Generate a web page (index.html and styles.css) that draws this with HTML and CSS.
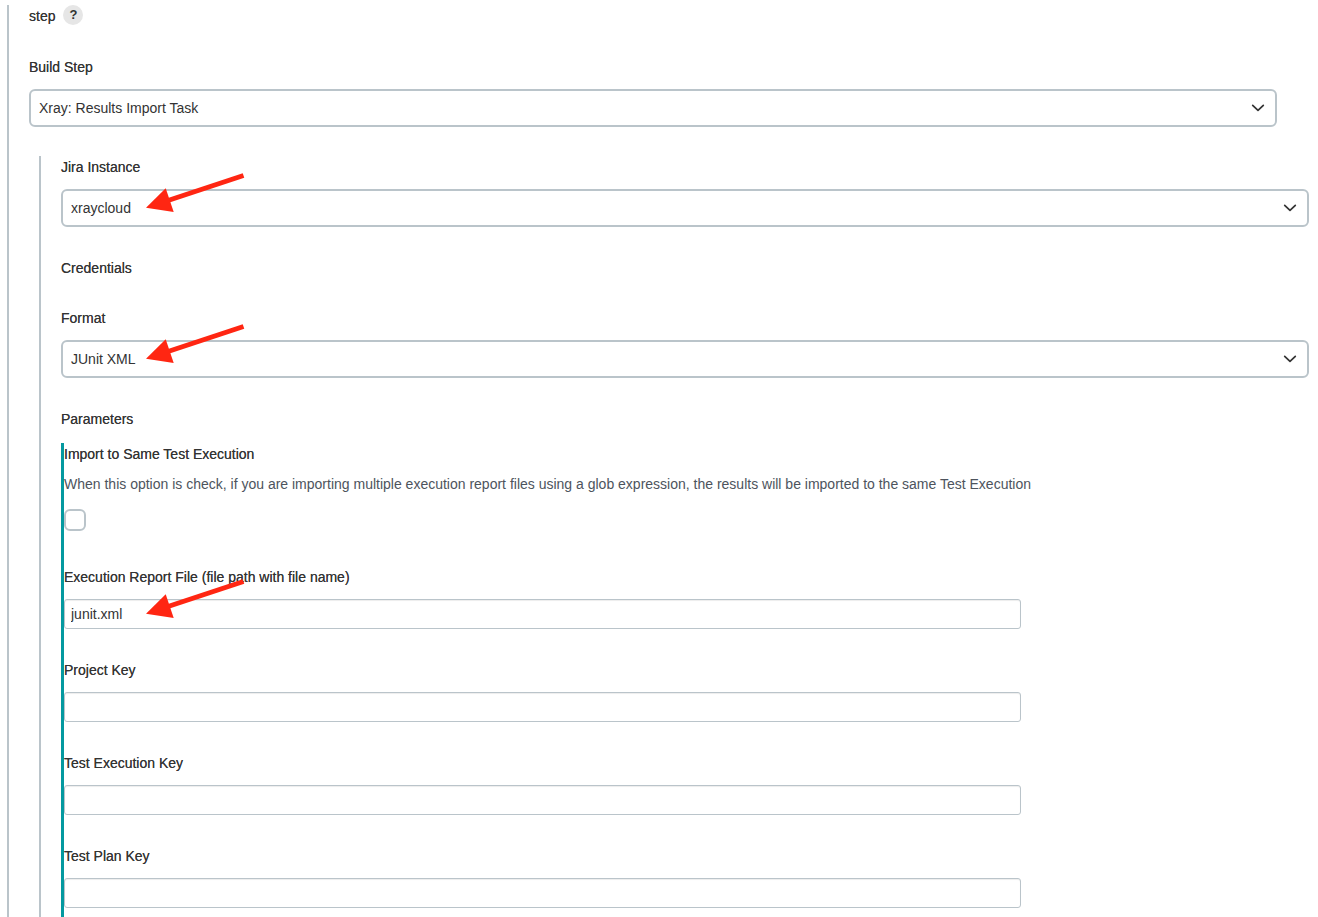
FILE: index.html
```html
<!DOCTYPE html>
<html lang="en">
<head>
  <meta charset="UTF-8">
  <meta name="viewport" content="width=device-width, initial-scale=1.0">
  <title>Build Step</title>
  <link rel="stylesheet" href="styles.css">
</head>
<body>
  <svg width="0" height="0" class="symbols">
    <symbol id="chevron" viewBox="0 0 14 8">
      <path d="M1.7 1.3 7 6.3 12.3 1.3" fill="none" stroke="#333" stroke-width="1.7" stroke-linecap="round" stroke-linejoin="round"/>
    </symbol>
    <symbol id="arrow" viewBox="0 0 100 42">
      <path d="M97.5 3.5 22 28.5" stroke="#ff2612" stroke-width="5"/>
      <path d="M0 35.8 19.7 16.2 27.7 40z" fill="#ff2612"/>
    </symbol>
  </svg>

  <form class="step">
    <div class="step-head">
      <span class="label">step</span>
      <button type="button" class="help" aria-label="Help">?</button>
    </div>

    <div class="field build-step">
      <label class="label" for="build-step">Build Step</label>
      <div class="control">
        <select id="build-step">
          <option>Xray: Results Import Task</option>
        </select>
        <svg class="chevron"><use href="#chevron"/></svg>
      </div>
    </div>

    <div class="nested">
      <div class="field">
        <label class="label" for="jira-instance">Jira Instance</label>
        <div class="control">
          <select id="jira-instance">
            <option>xraycloud</option>
          </select>
          <svg class="chevron"><use href="#chevron"/></svg>
          <svg class="arrow"><use href="#arrow"/></svg>
        </div>
      </div>

      <div class="label credentials">Credentials</div>

      <div class="field">
        <label class="label" for="format">Format</label>
        <div class="control">
          <select id="format">
            <option>JUnit XML</option>
          </select>
          <svg class="chevron"><use href="#chevron"/></svg>
          <svg class="arrow"><use href="#arrow"/></svg>
        </div>
      </div>

      <div class="label parameters-title">Parameters</div>

      <div class="parameters">
        <div class="check-field">
          <label class="label" for="same-execution">Import to Same Test Execution</label>
          <p class="description">When this option is check, if you are importing multiple execution report files using a glob expression, the results will be imported to the same Test Execution</p>
          <input type="checkbox" id="same-execution">
        </div>

        <div class="field">
          <label class="label" for="report-file">Execution Report File (file path with file name)</label>
          <div class="control">
            <input type="text" id="report-file" value="junit.xml">
            <svg class="arrow arrow-input"><use href="#arrow"/></svg>
          </div>
        </div>

        <div class="field">
          <label class="label" for="project-key">Project Key</label>
          <input type="text" id="project-key">
        </div>

        <div class="field">
          <label class="label" for="execution-key">Test Execution Key</label>
          <input type="text" id="execution-key">
        </div>

        <div class="field">
          <label class="label" for="plan-key">Test Plan Key</label>
          <input type="text" id="plan-key">
        </div>
      </div>
    </div>
  </form>
</body>
</html>
```
FILE: styles.css
```css
* {
  box-sizing: border-box;
}
body {
  display: flex;
  min-height: 100vh;
  margin: 0;
  padding: 5px 9px 0 7px;
  font-family: "Helvetica Neue", "Liberation Sans", Arial, sans-serif;
  font-size: 14px;
  line-height: 22px;
  color: #333;
  background: #fff;
}
.symbols {
  position: absolute;
}
.step {
  flex: 1;
  display: flex;
  flex-direction: column;
  border-left: 2px solid #bac4ca;
}
.step-head {
  display: flex;
  align-items: center;
  gap: 8px;
  margin: 0 0 29px 20px;
}
.label {
  display: block;
  color: #333;
  text-shadow: 0 0 0 rgba(51, 51, 51, 0.8);
}
.help {
  width: 20px;
  height: 20px;
  margin-bottom: 2px;
  padding: 0;
  border: none;
  border-radius: 50%;
  background: #e6e6e6;
  color: #333;
  font: bold 13px/20px "Liberation Sans", Arial, sans-serif;
}
.field {
  display: flex;
  flex-direction: column;
  gap: 11px;
  margin-bottom: 30px;
}
.field.build-step {
  margin: 0 32px 29px 20px;
}
.control {
  position: relative;
}
select,
input[type="text"] {
  display: block;
  width: 100%;
  background: #fff;
  color: #333;
  font: inherit;
}
select {
  appearance: none;
  height: 38px;
  padding: 0 40px 0 8px;
  border: 2px solid #bac4ca;
  border-radius: 6px;
}
input[type="text"] {
  max-width: 957px;
  height: 30px;
  padding: 0 6px;
  border: 1px solid #bac4ca;
  border-radius: 3px;
  box-shadow: inset 0 1px 1px rgba(0, 0, 0, 0.075);
}
.chevron {
  position: absolute;
  top: 15px;
  right: 12px;
  width: 14px;
  height: 8px;
  pointer-events: none;
}
.arrow {
  position: absolute;
  top: -17px;
  left: 85px;
  width: 100px;
  height: 42px;
  pointer-events: none;
}
.arrow-input {
  top: -21px;
  left: 82px;
}
.nested {
  flex: 1;
  display: flex;
  flex-direction: column;
  margin-left: 30px;
  padding-left: 20px;
  border-left: 2px solid #bac4ca;
}
.credentials {
  margin-bottom: 28px;
}
.parameters-title {
  margin-bottom: 13px;
}
.parameters {
  flex: 1;
  border-left: 3px solid #0499a0;
}
.parameters .field:last-child {
  margin-bottom: 0;
}
.check-field {
  margin-bottom: 35px;
}
.description {
  margin: 8px 0 14px;
  color: #4d545d;
}
input[type="checkbox"] {
  display: block;
  appearance: none;
  width: 22px;
  height: 22px;
  margin: 0;
  border: 2px solid #bac4ca;
  border-radius: 6px;
  background: #fff;
}
input[type="checkbox"]:checked {
  background: #0499a0;
}
```
